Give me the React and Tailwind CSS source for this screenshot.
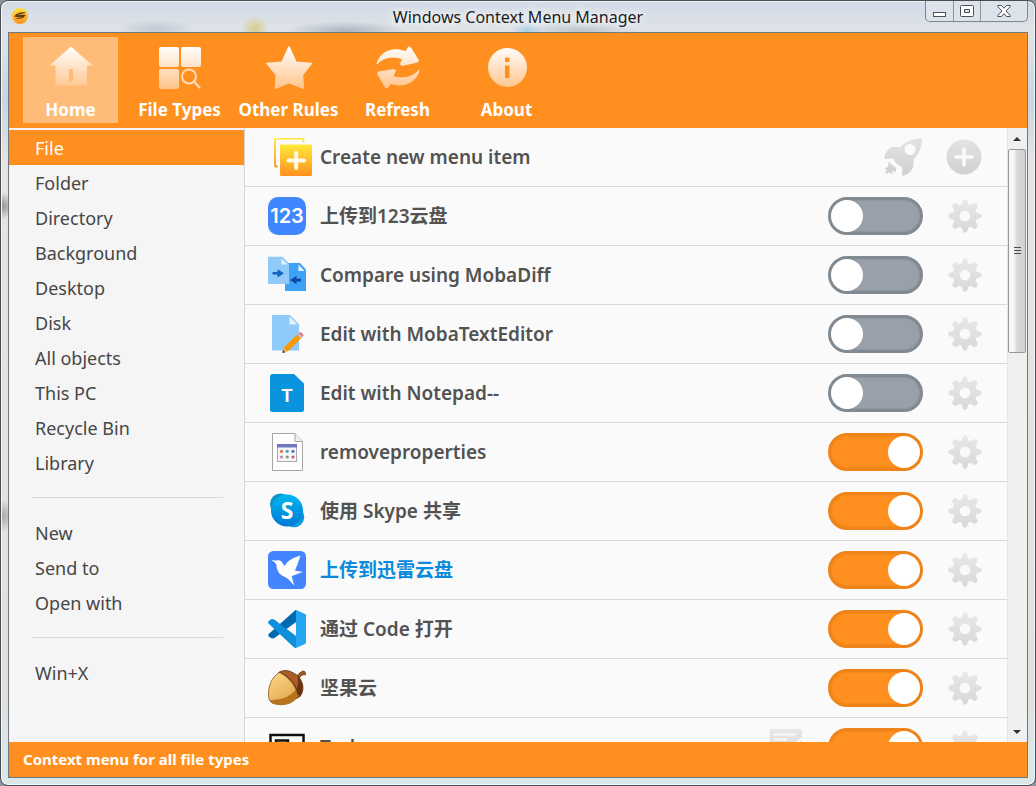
import React, { useState } from "react";

const FONT =
  "font-['Noto_Sans','Noto_Sans_CJK_SC',sans-serif]";

/* ---------- gradients shared by the icons ---------- */
function Gradients() {
  return (
    <svg width="0" height="0" className="absolute" aria-hidden="true">
      <defs>
        <linearGradient id="toolFill" x1="0" y1="4" x2="0" y2="46" gradientUnits="userSpaceOnUse">
          <stop offset="0" stopColor="#ffffff" />
          <stop offset="1" stopColor="#ffc58c" />
        </linearGradient>
        <linearGradient id="greyFill" x1="0" y1="0" x2="0" y2="38" gradientUnits="userSpaceOnUse">
          <stop offset="0" stopColor="#e4e4e4" />
          <stop offset="1" stopColor="#cfcfcf" />
        </linearGradient>
        <linearGradient id="gearFill" x1="0" y1="0" x2="0" y2="34" gradientUnits="userSpaceOnUse">
          <stop offset="0" stopColor="#e8e8e8" />
          <stop offset="1" stopColor="#d8d8d8" />
        </linearGradient>
        <linearGradient id="newFill" x1="0" y1="0" x2="0" y2="1">
          <stop offset="0" stopColor="#ffe93a" />
          <stop offset="1" stopColor="#ff9020" />
        </linearGradient>
        <linearGradient id="skypeFill" x1="0" y1="0" x2="0" y2="1">
          <stop offset="0" stopColor="#00b7f0" />
          <stop offset="1" stopColor="#0078d4" />
        </linearGradient>
        <linearGradient id="acornFill" x1="0" y1="0" x2="0.6" y2="1">
          <stop offset="0" stopColor="#fbd98c" />
          <stop offset="1" stopColor="#e3a94c" />
        </linearGradient>
        <linearGradient id="logoFill" x1="0" y1="0" x2="0" y2="1">
          <stop offset="0" stopColor="#ffe23a" />
          <stop offset="1" stopColor="#ff9020" />
        </linearGradient>
      </defs>
    </svg>
  );
}

/* ---------- toolbar icons (50 x 50) ---------- */
const HomeIcon = () => (
  <svg viewBox="0 0 50 50" className="size-[50px]" fill="url(#toolFill)">
    <path fillRule="evenodd" d="M25 4.500 3.500 23.500H9.500V42Q9.500 43.500 11 43.500H39.500Q41 43.500 41 42V23.500H46.500ZM23 27H27V39.500H23Z" />
  </svg>
);
const TypesIcon = () => (
  <svg viewBox="0 0 50 50" className="size-[50px]" fill="url(#toolFill)">
    <rect x="4" y="5" width="20" height="20" rx="2" />
    <rect x="26" y="5" width="20" height="20" rx="2" />
    <rect x="4" y="27" width="20" height="20" rx="2" />
    <g fill="none" stroke="#ffdcb8" strokeWidth="2">
      <circle cx="34" cy="34.500" r="7" />
      <path d="m39 39.500 5.500 6" strokeLinecap="round" />
    </g>
  </svg>
);
const StarIcon = () => (
  <svg viewBox="0 0 50 50" className="size-[50px]" fill="url(#toolFill)" stroke="url(#toolFill)" strokeWidth="1.500" strokeLinejoin="round">
    <path d="m25 4.800 7 15.400 15.500 1.200-9 11.300.8 13.500L25 40.500 11.500 46.200l.8-13.500-9.300-11.300 15-1.200Z" />
  </svg>
);
const RefreshIcon = () => (
  <svg viewBox="0 0 50 50" className="size-[50px]" fill="url(#toolFill)" stroke="url(#toolFill)" strokeWidth="1" strokeLinejoin="round">
    <path d="M4 22C6 13 14 7 25 7.800L33 9.500 35.500 5 37.500 5.500 45.500 18.500 44.500 20 29 23.500 27.500 22 29.500 16.800C20 13.500 10 15 4 22Z" />
    <path d="M46 28C44.500 37 36 43.500 25 43L17.500 41.500 14.500 46 12.500 45.500 4.500 31.500 5.500 30 21 27.500 22.500 28.500 20 34.500C30 37.500 40 35.500 46 28Z" />
  </svg>
);
const InfoIcon = () => (
  <svg viewBox="0 0 50 50" className="size-[50px]" fill="url(#toolFill)">
    <path fillRule="evenodd" d="M25.500 6a19.500 19.500 0 1 0 0 39 19.500 19.500 0 0 0 0-39ZM23 15.500h4.500v4.500h-4.500ZM23 23.500h4.500v12.500h-4.500Z" />
  </svg>
);

/* ---------- list icons (38 x 38) ---------- */
const Box = ({ children }) => (
  <svg viewBox="0 0 38 38" className="size-[38px] shrink-0" aria-hidden="true">
    {children}
  </svg>
);
const NewItemIcon = () => (
  <svg viewBox="0 0 38 38" className="ml-1.5 -mr-1.5 size-[38px] shrink-0" aria-hidden="true">
    <path d="M3 28.500H1.800Q1 28.500 1 27.500V2Q1 .7 2.200 .7H28Q29.500 .7 29.500 2V3.500" fill="none" stroke="url(#newFill)" strokeWidth="1.800" strokeLinecap="round" />
    <rect x="6" y="6.500" width="32" height="31.500" rx="1.500" fill="url(#newFill)" />
    <path d="M22.200 15v15M14.500 22.600h15.500" stroke="#fffbe8" strokeWidth="4" strokeLinecap="round" />
  </svg>
);
const Pan123Icon = () => (
  <Box>
    <rect width="38" height="38" rx="10" fill="#3f86ff" />
    <text x="19" y="26" textAnchor="middle" fontFamily="Inter" fontWeight="600" fontSize="20" fill="#fff">123</text>
  </Box>
);
const DiffIcon = () => (
  <Box>
    <path d="M17 7h15l6 6.500V35H17Z" fill="#3da2f5" />
    <path d="M30.500 8.500 36.500 15h-6Z" fill="#e4f3fe" />
    <path d="M0 .8h14.500L21 7.500V28H0Z" fill="#90caf9" />
    <path d="M13.500 2.500 19.500 8.500h-6Z" fill="#e4f3fe" />
    <path d="M4.500 16h5V13.200L16 17.300 9.500 21.400V18.600H4.500Z" fill="#1565c0" />
    <path d="M33 22.700H28.500V20L22 24.100l6.500 4.200V25.500H33Z" fill="#0d47a1" />
  </Box>
);
const EditorIcon = () => (
  <Box>
    <path d="M4 0h18l9 9v26.500H4Z" fill="#90caf9" />
    <path d="M21.500 1.500 29.500 9.500h-8Z" fill="#e4f3fe" />
    <path d="m15.500 33 13.500-13.500 4 4L19.500 36.500Z" fill="#ff9800" />
    <path d="m29 19.500 1.800-1.500 4 4L33 23.500Z" fill="#b0bec5" />
    <path d="m30.800 18 1-.8q.8-.4 1.400.2l2 2q.7.700.2 1.400l-.8 1Z" fill="#e57373" />
    <path d="m15.500 33-.8 4.500 4.800-1Z" fill="#ffb74d" />
    <path d="m15 34.800-.6 3.200 3-.6Z" fill="#37474f" />
  </Box>
);
const NotepadIcon = () => (
  <Box>
    <path d="M5 0H26L36 9.500V35.500Q36 38 33.500 38H4.500Q2 38 2 35.500V2.500Q2 0 5 0Z" fill="#0b94de" />
    <text x="19" y="28" textAnchor="middle" fontFamily="Liberation Sans" fontSize="18" fill="#fff">T</text>
  </Box>
);
const PropsIcon = () => (
  <Box>
    <path d="M4.500 .5H27L34.500 8.500V37.500H4.500Z" fill="#fefefe" stroke="#a6a6a6" />
    <path d="M27 .5V8.500H34.500" fill="#efefef" stroke="#a6a6a6" />
    <rect x="9.500" y="11.500" width="19" height="17" fill="#f7f7f9" stroke="#a9a9b2" />
    <rect x="9" y="11" width="20" height="3.500" fill="#6f76c4" />
    <g fill="#d9744a"><circle cx="13.500" cy="18.300" r="1.600" /><circle cx="25" cy="18.300" r="1.600" fill="#5a6fd0" /><circle cx="19.200" cy="18.300" r="1.600" fill="#4b9fb5" /></g>
    <g fill="#c77fb4"><circle cx="13.500" cy="24" r="1.600" /><circle cx="19.200" cy="24" r="1.600" fill="#7da36a" /><circle cx="25" cy="24" r="1.600" fill="#c4607c" /></g>
  </Box>
);
const SkypeIcon = () => (
  <Box>
    <circle cx="12.500" cy="12" r="10.500" fill="#0a95c9" />
    <circle cx="26" cy="25" r="10.300" fill="#0b9be0" />
    <circle cx="19" cy="18.500" r="16" fill="url(#skypeFill)" />
    <text x="19" y="26.500" textAnchor="middle" fontFamily="Open Sans" fontWeight="700" fontSize="23" fill="#fff">S</text>
  </Box>
);
const ThunderIcon = () => (
  <Box>
    <rect width="38" height="38" rx="5.500" fill="#4285ff" />
    <path d="M3.500 9.500C6 8.500 7.500 10 9 9.500 11.500 8.500 14 10 15 13L16.500 15C20 9 26 6.500 32.500 4.500 31 7 32 8.500 30 11 31 12 29 14 28 17 27.500 18.500 26.800 19.500 26.500 19.500L35 21C30 22 29 24 23.500 25 24.500 27 24.500 29.500 26.500 34.500 23.500 32 21 28 17 26 10.500 24 8.500 18 8.500 14 7.500 11.500 6 10.500 3.500 9.500Z" fill="#fff" />
  </Box>
);
const CodeIcon = () => (
  <Box>
    <path d="M27.500 0 38 5v4L28 12 6.500 28 4 28.500 .7 26.500Q-.3 25.300 .7 24Z" fill="#0069b0" />
    <path d="M.8 11.500 4 9.300 6.500 9.800 28 26.500V38Z" fill="#0a86d1" />
    <path d="M0 13Q0 11.500 1 10.800L3 9.300Q4.500 8.800 6 9.800L28 26V38Q26.500 38 25 36.500Z" fill="#0e8fdc" />
    <path d="M28 0 37 4Q38 4.600 38 6V32Q38 33.500 37 34L28 38Z" fill="#24a6f2" />
  </Box>
);
const AcornIcon = () => (
  <Box>
    <path d="M28 8Q31 3.500 34.500 2.200Q37 1.500 37.500 4.500V5.800Q33 5 31.500 9Z" fill="#a05a26" stroke="#5f2f10" strokeWidth=".8" />
    <path d="M10.500 3.500Q18 -1 26.500 4.500C34 9 37 18 33.500 25Q31.500 29 28 29.500Z" fill="#a95e2a" stroke="#5f2f10" strokeWidth=".8" />
    <path d="M29.500 7.500C36 14 36 22 32 28Q30 25 28 21Q31 14 29.500 7.500Z" fill="#6b330f" />
    <path d="M12 3.200C3 8 0 18 .5 27.500Q1 32 4 34Q13 37.500 22 34Q28 31 30 27 27 12 12 3.200Z" fill="url(#acornFill)" stroke="#8a5420" strokeWidth=".8" />
    <path d="M28.500 20Q29.500 24 29.700 27 28 31 22 34 13 37.300 4 33.700 3 32.500 1.500 31Q19 32 28.500 20Z" fill="#b8731f" />
    <path d="M11.500 3.200C20 7 28 14 30 26" fill="none" stroke="#6b330f" strokeWidth="1" />
  </Box>
);
const FrameIcon = () => (
  <Box>
    <rect x="2.500" y="7" width="33" height="30" fill="#fff" stroke="#111" strokeWidth="2.500" />
    <rect x="8" y="12.500" width="12" height="16" fill="none" stroke="#111" strokeWidth="2.500" />
  </Box>
);

/* ---------- row action icons ---------- */
const GearIcon = () => (
  <svg viewBox="0 0 34 34" className="size-[34px]" aria-hidden="true">
    <g fill="url(#gearFill)">
      <path
        fillRule="evenodd"
        d="M14.600 2.200Q15 .2 17 .2T19.400 2.200L20.200 5.200Q21.600 5.600 22.800 6.300L25.400 4.600Q27.300 3.600 28.800 5.100T29.300 8.600L27.600 11.200Q28.300 12.400 28.700 13.800L31.700 14.600Q33.800 15 33.800 17T31.700 19.400L28.700 20.200Q28.300 21.600 27.600 22.800L29.300 25.400Q30.300 27.300 28.800 28.800T25.400 29.400L22.800 27.700Q21.600 28.400 20.200 28.800L19.400 31.700Q19 33.800 17 33.800T14.600 31.700L13.800 28.800Q12.400 28.400 11.200 27.700L8.600 29.400Q6.700 30.300 5.200 28.800T4.600 25.400L6.300 22.800Q5.600 21.600 5.200 20.200L2.300 19.400Q.2 19 .2 17T2.300 14.600L5.200 13.800Q5.600 12.400 6.300 11.200L4.600 8.600Q3.700 6.600 5.200 5.100T8.600 4.600L11.200 6.300Q12.400 5.600 13.800 5.200ZM17 11.700a5.300 5.300 0 1 0 0 10.600 5.300 5.300 0 0 0 0-10.600Z"
      />
    </g>
  </svg>
);
const RocketIcon = () => (
  <svg viewBox="0 0 38 38" className="size-[38px]" fill="url(#greyFill)" aria-hidden="true">
    <path
      fillRule="evenodd"
      d="M37 0Q38 0 38 1C38 9 35.500 15 29.500 21.500 30 27 29.500 30 26.500 33.500 24.500 35.500 22.500 36.500 19.500 37.500 18 38 17.800 37 18 36L18.500 30.500Q17.500 27.500 14.500 27L11.500 24.500Q10.500 21.500 8.500 20.500L1.500 21Q-.3 21 .3 19 2 12.500 6.500 9.500 10.500 8.500 16 9.500 22 1.500 37 0ZM26 6a5.500 5.500 0 1 0 0 11 5.500 5.500 0 0 0 0-11Z"
    />
    <path d="M4.500 23.500Q6.500 24.500 7.500 26.500L11.500 29.500 12.500 31Q12 33.500 10.500 34.500L9 32.500 7.500 36.500 5.500 34.500 1.500 36 2.500 32 .8 30 4 29Z" />
  </svg>
);
const PlusCircleIcon = () => (
  <svg viewBox="0 0 36 36" className="size-9" aria-hidden="true">
    <circle cx="18" cy="18" r="17.500" fill="url(#greyFill)" />
    <path d="M18 10v16M10 18h16" stroke="#fafafa" strokeWidth="3.500" strokeLinecap="round" />
  </svg>
);
const NoteIcon = () => (
  <svg viewBox="0 0 38 38" className="size-[38px]" aria-hidden="true">
    <path d="M2.500 1H31.500Q34 1 34 3.500V30Q34 32 32 32H4Q1.500 32 1.500 30V3Q1.500 1 2.500 1Z" fill="url(#gearFill)" />
    <path d="M6 6.500h22M6 11.500h13" stroke="#fafafa" strokeWidth="2" />
    <path d="m27 17 6-6 3 3" fill="none" stroke="#fafafa" strokeWidth="2" />
  </svg>
);

/* ---------- data ---------- */
const TOOLS = [
  { label: "Home", Icon: HomeIcon },
  { label: "File Types", Icon: TypesIcon },
  { label: "Other Rules", Icon: StarIcon },
  { label: "Refresh", Icon: RefreshIcon },
  { label: "About", Icon: InfoIcon },
];
const SCENES = [
  ["File", "Folder", "Directory", "Background", "Desktop", "Disk", "All objects", "This PC", "Recycle Bin", "Library"],
  ["New", "Send to", "Open with"],
  ["Win+X"],
];
const ITEMS = [
  { name: "上传到123云盘", Icon: Pan123Icon, on: false },
  { name: "Compare using MobaDiff", Icon: DiffIcon, on: false },
  { name: "Edit with MobaTextEditor", Icon: EditorIcon, on: false },
  { name: "Edit with Notepad--", Icon: NotepadIcon, on: false },
  { name: "removeproperties", Icon: PropsIcon, on: true },
  { name: "使用 Skype 共享", Icon: SkypeIcon, on: true },
  { name: "上传到迅雷云盘", Icon: ThunderIcon, on: true, active: true },
  { name: "通过 Code 打开", Icon: CodeIcon, on: true },
  { name: "坚果云", Icon: AcornIcon, on: true },
  { name: "Task", Icon: FrameIcon, on: true, note: true },
];

function TitleBar() {
  return (
    <header className="relative flex h-[31px] shrink-0 items-center justify-center">
      <svg viewBox="0 0 16 16" className="absolute left-1 top-[7px] size-4" aria-hidden="true">
        <circle cx="8" cy="8" r="8" fill="url(#logoFill)" />
        <path d="M2.300 8.500C4.500 4.500 9 4 13.700 4.500 12.500 5.800 8 5.500 5 7.500 8 6.500 11 7 13.700 6.800 12 11 6.500 11.500 2.500 10.800 5 10.500 8.500 10 10 8.800 7 9.500 4.500 9.500 2.300 8.500Z" fill="#5c3a10" />
      </svg>
      <h1 className="text-base text-[#1c1c1c] [text-shadow:0_0_8px_#fff,0_0_8px_#fff]">Windows Context Menu Manager</h1>
      <div className="absolute right-0 top-0 flex h-[21px] overflow-hidden rounded-b-[5px] border border-t-0 border-[#7c8590] bg-[#dde3ea]">
        <button aria-label="Minimize" className="flex w-7 items-center justify-center border-r border-[#8b939e]">
          <svg viewBox="0 0 13 5" className="mt-1.5 h-[5px] w-[13px]"><rect x=".5" y=".5" width="12" height="4" fill="#fff" stroke="#4a505c" /></svg>
        </button>
        <button aria-label="Maximize" className="flex w-[27px] items-center justify-center border-r border-[#8b939e]">
          <svg viewBox="0 0 14 12" className="h-3 w-3.5">
            <path fillRule="evenodd" d="M1.500 .5h11q1 0 1 1v9q0 1-1 1h-11q-1 0-1-1v-9q0-1 1-1ZM4.500 4.500v3h5v-3Z" fill="#fff" stroke="#4a505c" />
          </svg>
        </button>
        <button aria-label="Close" className="flex w-[46px] items-center justify-center">
          <svg viewBox="0 0 14 12" className="h-3 w-3.5">
            <path d="M.7 .5H4.500L7 3.300 9.500 .5h3.800v1L9 6l4.300 4.500v1H9.500L7 8.700 4.500 11.500H.7v-1L5 6 .7 1.500Z" fill="#fff" stroke="#4a505c" />
          </svg>
        </button>
      </div>
    </header>
  );
}

function Toolbar({ tool, setTool }) {
  return (
    <nav className="flex shrink-0 gap-3.5 bg-[#ff9020] px-3.5 pt-1 pb-[5px]">
      {TOOLS.map(({ label, Icon }) => (
        <button
          key={label}
          onClick={() => setTool(label)}
          className={`flex h-[86px] w-[95px] flex-col items-center whitespace-nowrap pt-[5px] text-[17px] leading-6 font-bold text-white ${tool === label ? "bg-[#ffbc79]" : ""}`}
        >
          <Icon />
          <span className="mt-1.5">{label}</span>
        </button>
      ))}
    </nav>
  );
}

function Sidebar({ scene, setScene }) {
  return (
    <aside className="w-[236px] shrink-0 border-r border-[#d6d6d6] bg-[#f5f5f5] pt-0.5 text-lg text-[#464646]">
      {SCENES.map((group, i) => (
        <div key={i}>
          {i > 0 && (
            <div className="flex h-[35px] items-center pr-[21px] pl-[23px]">
              <hr className="w-full border-[#d9d9d9]" />
            </div>
          )}
          {group.map((name) => (
            <button
              key={name}
              onClick={() => setScene(name)}
              className={`flex h-[35px] w-full items-center pl-[26px] ${scene === name ? "bg-[#ff9020] text-white" : ""}`}
            >
              {name}
            </button>
          ))}
        </div>
      ))}
    </aside>
  );
}

const rowClass = "flex h-[59px] items-center border-b border-[#d9d9d9] pr-[25px] pl-[23px]";

function ItemList() {
  const [state, setState] = useState(() => ITEMS.map((item) => item.on));
  const toggle = (i) => setState(state.map((v, j) => (j === i ? !v : v)));
  return (
    <ul className="min-w-0 flex-1 overflow-y-auto text-[19px] font-semibold text-[#525252] [scrollbar-width:none]">
      <li className={rowClass}>
        <NewItemIcon />
        <span className="ml-3.5 flex-1">Create new menu item</span>
        <button aria-label="Restart Explorer"><RocketIcon /></button>
        <button aria-label="Create" className="ml-6"><PlusCircleIcon /></button>
      </li>
      {ITEMS.map(({ name, Icon, active, note }, i) => (
        <li key={name} className={rowClass}>
          <Icon />
          <label htmlFor={`item-${i}`} className={`ml-3.5 flex-1 ${active ? "text-[#0a8adc]" : ""}`}>
            {name}
          </label>
          {note && (
            <button aria-label="Edit text" className="mr-[22px]"><NoteIcon /></button>
          )}
          <input
            id={`item-${i}`}
            type="checkbox"
            checked={state[i]}
            onChange={() => toggle(i)}
            className="h-[38px] w-[95px] shrink-0 appearance-none rounded-full border-3 border-[#818991] bg-[#99a0aa] inset-shadow-[0_0_1px_1px_#8f969f] before:block before:size-8 before:rounded-full before:bg-white checked:border-[#ee8419] checked:bg-[#ff9020] checked:inset-shadow-[0_0_1px_1px_#f48a1c] checked:before:ml-auto"
          />
          <button aria-label={`${name} options`} className="ml-[25px]"><GearIcon /></button>
        </li>
      ))}
    </ul>
  );
}

function ScrollTrack() {
  return (
    <div className="flex w-5 shrink-0 flex-col items-center border-l border-[#e3e3e3] bg-[#f0f0f0] pr-px" aria-hidden="true">
      <div className="flex h-[21px] items-center">
        <svg viewBox="0 0 8 4" className="h-1 w-2"><path d="M4 0 8 4H0Z" fill="#333" /></svg>
      </div>
      <div className="flex h-[204px] w-full items-center justify-center rounded-xs border border-[#979797] bg-linear-to-r from-[#f6f6f6] from-30% via-[#d8d9dc] via-50% to-[#d0d1d5]">
        <svg viewBox="0 0 7 8" className="h-2 w-[7px]"><path d="M0 .5h7M0 3.500h7M0 6.500h7" stroke="#4c4c4c" /></svg>
      </div>
      <div className="flex-1" />
      <div className="flex h-[21px] items-center">
        <svg viewBox="0 0 8 4" className="h-1 w-2"><path d="M0 0H8L4 4Z" fill="#333" /></svg>
      </div>
    </div>
  );
}

export default function App() {
  const [tool, setTool] = useState("Home");
  const [scene, setScene] = useState("File");
  return (
    <div className={`h-screen bg-[#8d9399] ${FONT}`}>
      <Gradients />
      <div className="flex h-full flex-col rounded-lg border border-[#4a4e52] bg-[radial-gradient(circle_14px_at_254px_28px,#d8cd8c,transparent),radial-gradient(ellipse_60px_10px_at_345px_30px,#a9b4bf,transparent),radial-gradient(ellipse_40px_10px_at_155px_28px,#bfc9d4,transparent),radial-gradient(ellipse_16px_8px_at_526px_30px,#a9cfe8,transparent),radial-gradient(ellipse_60px_10px_at_580px_30px,#bcc6d0,transparent),radial-gradient(circle_14px_at_0px_205px,#8f8f8c,transparent),radial-gradient(circle_16px_at_0px_515px,#a5a5a2,transparent),linear-gradient(#d3dae6,#e0e4e8_32px,#c9d4e0_100px,#e4e4e2_160px,#e0e0de_700px,#dbe6e7_750px)] px-[7px] pb-[7px] shadow-[inset_0_0_0_1px_#f4f7fa]">
        <TitleBar />
        <main className="flex min-h-0 flex-1 flex-col border border-[#6f7780] bg-[#fafafa]">
          <Toolbar tool={tool} setTool={setTool} />
          <div className="flex min-h-0 flex-1">
            <Sidebar scene={scene} setScene={setScene} />
            <ItemList />
            <ScrollTrack />
          </div>
          <footer className="flex h-[35px] shrink-0 items-center bg-[#ff9020] px-3.5 text-[15px] font-bold text-white">
            Context menu for all file types
          </footer>
        </main>
      </div>
    </div>
  );
}
